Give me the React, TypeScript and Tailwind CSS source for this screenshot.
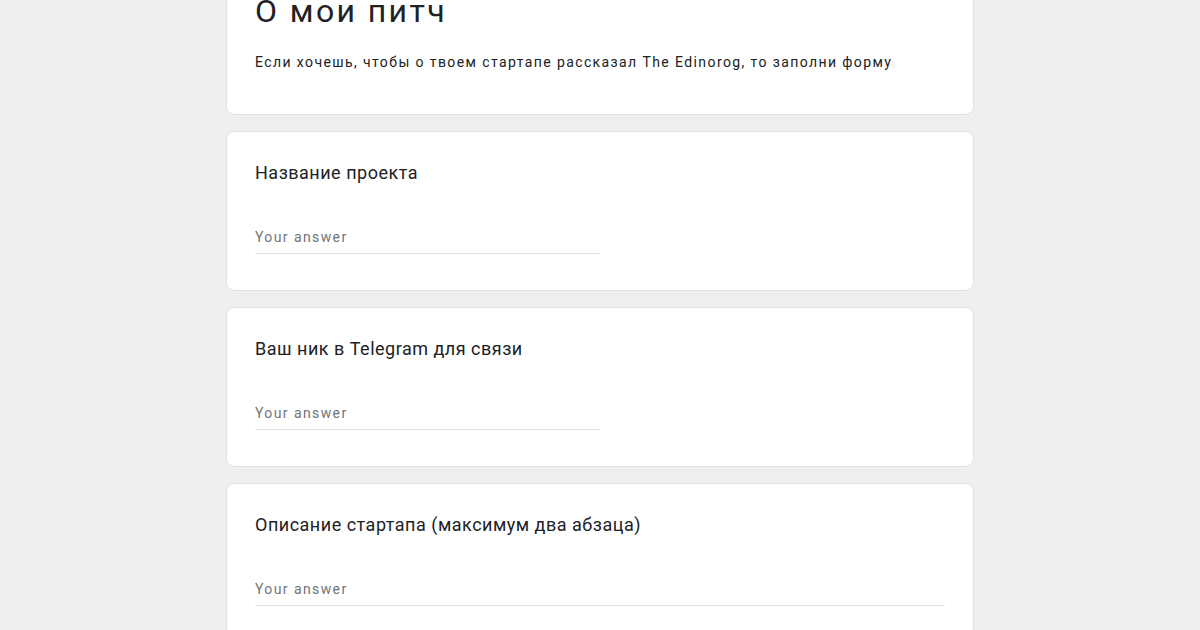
import React from 'react'

type Question = {
  title: string
  long?: boolean
}

const QUESTIONS: Question[] = [
  { title: 'Название проекта' },
  { title: 'Ваш ник в Telegram для связи' },
  { title: 'Описание стартапа (максимум два абзаца)', long: true },
]

function QuestionCard({ q }: { q: Question }) {
  return (
    <div className="bg-white rounded-[8px] border border-[#e2e2e2] pt-[29px] px-[28px] pb-[36px]">
      <div className="text-[18px] leading-[24px] text-[#202124] tracking-[0.5px]">{q.title}</div>
      <div className={q.long ? 'mt-[37px] w-full' : 'mt-[37px] w-1/2'}>
        <div className="h-[32px] flex items-center border-b border-[#e0e0e0] text-[14px] text-[#70757a] tracking-[1.4px]">
          Your answer
        </div>
      </div>
    </div>
  )
}

export default function App() {
  return (
    <div
      className="min-h-screen bg-[#efefef] overflow-hidden"
      style={{ fontFamily: 'Roboto, "Noto Sans", sans-serif' }}
    >
      <div className="w-[748px] mx-auto -mt-[10px] flex flex-col gap-[16px]">
        <div className="bg-white rounded-b-[8px] border border-t-0 border-[#e2e2e2] px-[28px] pb-[42px]">
          <div className="text-[32px] leading-[42px] text-[#202124] tracking-[2.4px]">О мои питч</div>
          <div className="mt-[20px] text-[14px] leading-[20px] text-[#202124] tracking-[1.4px]">
            Если хочешь, чтобы о твоем стартапе рассказал The Edinorog, то заполни форму
          </div>
        </div>
        {QUESTIONS.map((q) => (
          <QuestionCard key={q.title} q={q} />
        ))}
      </div>
    </div>
  )
}
